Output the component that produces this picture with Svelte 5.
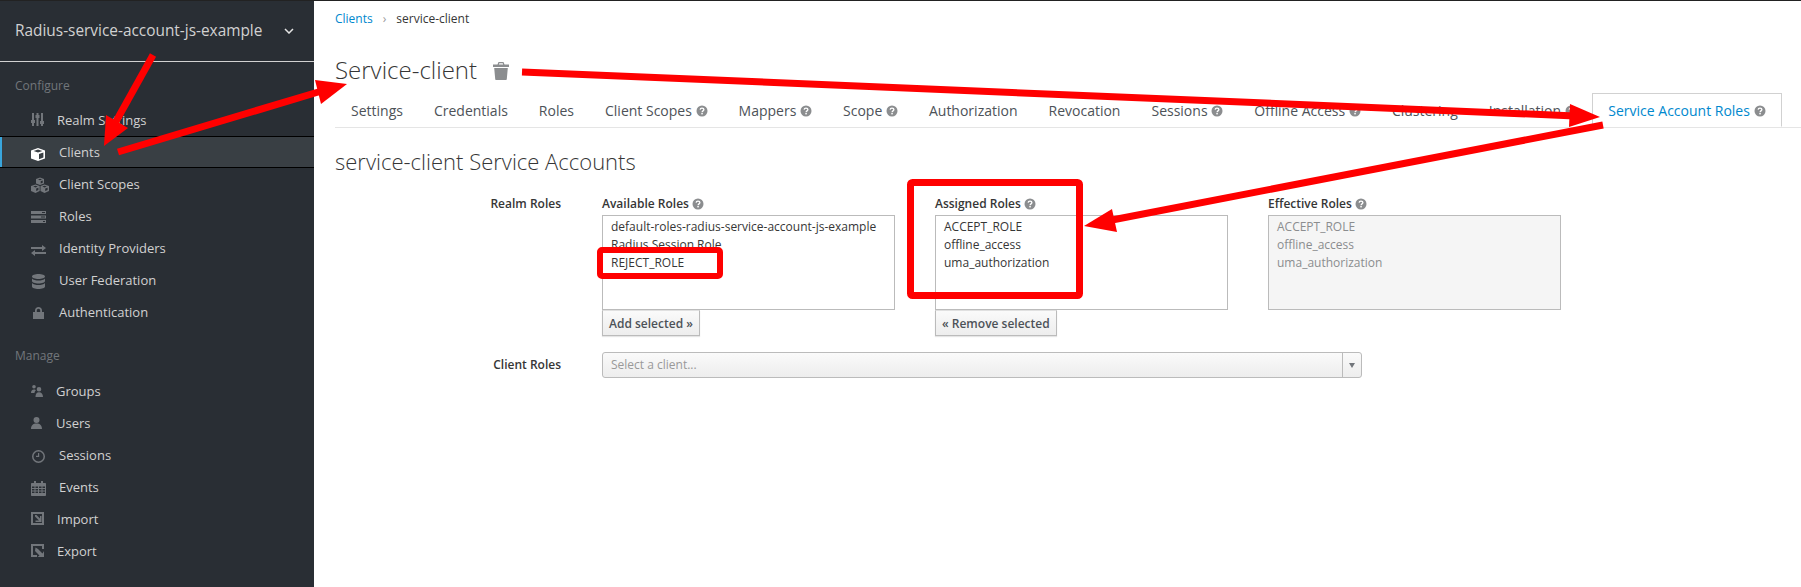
<script>
  const icons = {
    sliders: "M2 2h2v7h1v3H4v3H2v-3H1V9h1zM6.500 2h2v2h1v3h-1v8h-2V7h-1V4h1zM11 2h2v8h1v3h-1v2h-2v-2h-1v-3h1z",
    cube: "M8 5l7 2.400v8L8 18l-7-2.600v-8zM8 6.600L3.600 8 8 9.500 12.400 8zM9 11v5.200l4.400-1.700v-5z",
    cubes: "M10 2.500l4 1.500v4.500L10 10 6 8.500V4zM10 3.800L8 4.500l2 .8 2-.8zM10.700 6.300v2.200l2-.8V5.500zM5.500 9.500l4.200 1.500V16l-4.200 2L1 16v-5zM5.500 10.800l-2.300.8 2.300.9 2.200-.9zM6.200 13.500v2.600l2.200-1v-2.400zM14.500 9.500L19 11v5l-4.500 2-4-2v-5zM14.500 10.800l-2.200.8 2.200.9 2.300-.9zM15.200 13.500v2.600l2.400-1v-2.400z",
    roles: "M1 4h15v3H1zM12 5v1h3V5zM1 8.500h15v3H1zM11 9.500v1h4v-1zM1 13h15v3H1zM13 14v1h2v-1z",
    exchange: "M1 8h11V6l4 3-4 3v-2H1zM16 13H5v-2l-4 3 4 3v-2h11z",
    database: "M8.500 3c3.500 0 6.500 1 6.500 2.500S12 8 8.500 8 2 7 2 5.500 5 3 8.500 3zM2 7.500C3 9 6 9.500 8.500 9.500S14 9 15 7.500v2.500c0 1.500-3 2.500-6.500 2.500S2 11.500 2 10zM2 12c1 1.500 4 2 6.500 2s5.500-.5 6.500-2v3.500c0 1.500-3 2.500-6.500 2.500S2 17 2 15.500z",
    lock: "M5 9V7.500C5 5.500 6.500 4 8.500 4S12 5.500 12 7.500V9h2v7H3V9zM6.800 9h3.400V7.500c0-1-.7-1.800-1.700-1.800s-1.700.8-1.700 1.800z",
    groups: "M4 3a1.800 1.800 0 110 3.600A1.800 1.800 0 014 3zM1 11c0-2 1-3.500 3-3.500 1 0 1.500.3 2 .8C5 9 4.500 10 4.500 11zM9 5a2.300 2.300 0 110 4.600A2.300 2.300 0 019 5zM5.500 15c0-3 1.200-4.800 3.500-4.800s4 1.800 4 4.800z",
    user: "M6.500 3a3 3 0 110 6 3 3 0 010-6zM1 15c0-3.500 2-5.500 5.500-5.500S12 11.500 12 15z",
    clock: "M8.500 4a6.500 6.500 0 110 13 6.500 6.500 0 010-13zM8.500 5.500a5 5 0 100 10 5 5 0 000-10zM8 7h1.200v4H6v-1.200h2z",
    calendar: "M3 5h1V3h2v2h5V3h2v2h2c.6 0 1 .4 1 1v11c0 .6-.4 1-1 1H2c-.6 0-1-.4-1-1V6c0-.6.4-1 1-1zM2 8.500V10h2.500V8.500zM5.500 8.500V10H8V8.500zM9 8.500V10h2.500V8.500zM12.500 8.500V10H15V8.500zM2 11v1.500h2.500V11zM5.500 11v1.500H8V11zM9 11v1.500h2.500V11zM12.500 11v1.500H15V11zM2 13.500V15h2.500v-1.500zM5.500 13.500V15H8v-1.500zM9 13.500V15h2.500v-1.500zM12.500 13.500V15H15v-1.500z",
    import: "M1 2h13v13H1V2h2v11h9V4H3V2zM5 5h1.500l3.500 3.500V6h1.500v6H5.500v-1.500H9L5 6.500z",
    export: "M1 2h13v5h-2V4H3v9h4v2H1zM5.500 5.500L8 7l4.500 4.500L14 9v6H7.500l2-1.500-4.500-4.500z",
  };

  const configure = [
    { name: "Realm Settings", icon: "sliders", gap: 7 },
    { name: "Clients", icon: "cube", gap: 9, active: true },
    { name: "Client Scopes", icon: "cubes", gap: 9 },
    { name: "Roles", icon: "roles", gap: 9 },
    { name: "Identity Providers", icon: "exchange", gap: 9 },
    { name: "User Federation", icon: "database", gap: 9 },
    { name: "Authentication", icon: "lock", gap: 9 },
  ];
  const manage = [
    { name: "Groups", icon: "groups", gap: 6 },
    { name: "Users", icon: "user", gap: 6 },
    { name: "Sessions", icon: "clock", gap: 9 },
    { name: "Events", icon: "calendar", gap: 9 },
    { name: "Import", icon: "import", gap: 7 },
    { name: "Export", icon: "export", gap: 7 },
  ];

  const tabs = [
    { name: "Settings" },
    { name: "Credentials" },
    { name: "Roles" },
    { name: "Client Scopes", help: true },
    { name: "Mappers", help: true },
    { name: "Scope", help: true },
    { name: "Authorization" },
    { name: "Revocation" },
    { name: "Sessions", help: true },
    { name: "Offline Access", help: true },
    { name: "Clustering" },
    { name: "Installation", help: true },
    { name: "Service Account Roles", help: true, active: true },
  ];

  const available = ["default-roles-radius-service-account-js-example", "Radius Session Role", "REJECT_ROLE"];
  const assigned = ["ACCEPT_ROLE", "offline_access", "uma_authorization"];
</script>

{#snippet help()}
  <svg class="help" viewBox="0 0 12 12" aria-hidden="true">
    <circle cx="6" cy="6" r="5.500" fill="#8b8d8f" />
    <path d="M4.100 4.600c.1-1 .9-1.500 1.900-1.500 1.100 0 1.900.6 1.900 1.500 0 1.300-1.800 1.300-1.800 2.600" fill="none" stroke="#fff" stroke-width="1.300" />
    <rect x="5.300" y="8" width="1.500" height="1.400" fill="#fff" />
  </svg>
{/snippet}

{#snippet navRow(item)}
  <a class="nav-row" class:active={item.active} href="#top">
    <svg class="nav-icon" viewBox="0 0 20 18" aria-hidden="true">
      <path d={icons[item.icon]} fill-rule="evenodd" />
    </svg>
    <span style="margin-left: {item.gap}px">{item.name}</span>
  </a>
{/snippet}

<div class="page">
  <aside>
    <div class="realm">
      <span>Radius-service-account-js-example</span>
      <svg class="chevron" viewBox="0 0 10 6" aria-hidden="true">
        <path d="M1 1l4 4 4-4" fill="none" stroke="#e4e4e4" stroke-width="1.500" />
      </svg>
    </div>
    <h3 class="first">Configure</h3>
    {#each configure as item}
      {@render navRow(item)}
    {/each}
    <h3>Manage</h3>
    {#each manage as item}
      {@render navRow(item)}
    {/each}
  </aside>

  <main>
    <nav class="crumbs">
      <a href="#top">Clients</a>
      <span class="sep">›</span>
      <span>service-client</span>
    </nav>

    <h1>
      Service-client
      <svg class="trash" viewBox="0 0 16 18" aria-hidden="true">
        <path d="M5.500 0h5l1 2.500H16V5H0V2.500h4.500zM6.300 1.200L5.800 2.500h4.400l-.5-1.300zM1.200 6h13.600l-1 11c0 .6-.5 1-1 1H3.200c-.5 0-1-.4-1-1z" fill="#8b8d8f" fill-rule="evenodd" />
      </svg>
    </h1>

    <ul class="tabs">
      {#each tabs as tab}
        <li class:active={tab.active}>
          {tab.name}
          {#if tab.help}{@render help()}{/if}
        </li>
      {/each}
    </ul>

    <h2>service-client Service Accounts</h2>

    <div class="form-row">
      <span class="row-label">Realm Roles</span>
      <div class="col">
        <span class="col-label">Available Roles {@render help()}</span>
        <div class="list">
          {#each available as role}<div>{role}</div>{/each}
        </div>
        <button>Add selected »</button>
      </div>
      <div class="col">
        <span class="col-label">Assigned Roles {@render help()}</span>
        <div class="list">
          {#each assigned as role}<div>{role}</div>{/each}
        </div>
        <button>« Remove selected</button>
      </div>
      <div class="col">
        <span class="col-label">Effective Roles {@render help()}</span>
        <div class="list disabled">
          {#each assigned as role}<div>{role}</div>{/each}
        </div>
      </div>
    </div>

    <div class="form-row client-row">
      <span class="row-label">Client Roles</span>
      <div class="client-select">
        <span>Select a client...</span>
        <span class="addon"><i></i></span>
      </div>
    </div>
  </main>

  <!-- the red markup drawn on top of the screenshot -->
  <svg class="markup" viewBox="0 0 1801 587" aria-hidden="true">
    <g fill="none" stroke="#f00">
      <rect x="600" y="250" width="120" height="26" rx="2" stroke-width="6" />
      <rect x="910.500" y="182.500" width="169" height="113" rx="2" stroke-width="7" />
    </g>
    <g stroke="#f00" stroke-width="7">
      <line x1="153" y1="55" x2="114" y2="125" />
      <line x1="118" y1="152" x2="325" y2="90" />
      <line x1="522" y1="72" x2="1575" y2="116" />
      <line x1="1603" y1="125" x2="1112" y2="220" />
    </g>
    <g fill="#f00">
      <polygon points="104,146 106,115 128,128" />
      <polygon points="347,84 315,80 321,104" />
      <polygon points="1600,117 1570,104 1569,127" />
      <polygon points="1084,226 1112,209 1117,232" />
    </g>
  </svg>
</div>

<style>
  :global(body) {
    background: #fff;
    overflow: hidden;
  }

  .page {
    position: relative;
    display: flex;
    height: 587px;
    box-sizing: border-box;
    border-top: 1px solid #222;
    overflow: hidden;
    font-family: "Open Sans", "Liberation Sans", sans-serif;
    font-size: 12px;
    line-height: 18px;
    color: #363636;
  }

  aside {
    flex: 0 0 314px;
    background: #292e34;
    color: #d1d1d1;
  }

  .realm {
    display: flex;
    align-items: center;
    justify-content: space-between;
    height: 60px;
    padding: 0 20px 0 15px;
    border-bottom: 1px solid #d1d1d1;
    font-size: 15.400px;
    color: #d1d1d1;
  }

  .chevron {
    width: 10px;
    height: 6px;
  }

  h3 {
    margin: 18px 0 9px;
    padding-left: 15px;
    font-size: 12px;
    line-height: 20px;
    font-weight: 400;
    color: #72767b;
  }

  h3.first {
    margin-top: 14px;
    margin-bottom: 8px;
  }

  .nav-row {
    display: flex;
    align-items: center;
    height: 30px;
    padding-left: 30px;
    border-top: 1px solid transparent;
    border-bottom: 1px solid transparent;
    color: #d1d1d1;
    font-size: 13px;
    text-decoration: none;
  }

  .nav-row.active {
    background: #393f44;
    border-top-color: #000;
    border-bottom-color: #000;
    box-shadow: inset 2px 0 0 #39a5dc;
  }

  .nav-icon {
    flex: none;
    width: 20px;
    height: 18px;
    fill: #72767b;
  }

  .nav-row.active .nav-icon {
    fill: #fff;
  }

  main {
    flex: 1;
    min-width: 0;
    padding-left: 21px;
  }

  .crumbs {
    display: flex;
    gap: 10px;
    padding-top: 9px;
    color: #363636;
  }

  .crumbs a {
    color: #0088ce;
    text-decoration: none;
  }

  .sep {
    color: #9c9c9c;
  }

  h1 {
    display: flex;
    align-items: center;
    gap: 16px;
    margin: 26px 0 0;
    font-size: 24px;
    line-height: 32px;
    font-weight: 300;
    color: #363636;
  }

  .trash {
    width: 16px;
    height: 18px;
    margin-top: 2px;
  }

  .tabs {
    display: flex;
    margin: 7px 0 0;
    padding: 0;
    list-style: none;
    border-bottom: 1px solid #e5e5e5;
    height: 34px;
  }

  .tabs li {
    display: flex;
    align-items: center;
    gap: 3.700px;
    padding: 1px 15.500px 0;
    font-size: 14px;
    color: #4d5258;
    white-space: nowrap;
  }

  .tabs li:first-child {
    padding-left: 16px;
  }

  .tabs li.active {
    background: #fff;
    border: 1px solid #d1d1d1;
    border-bottom-color: #fff;
    color: #0088ce;
    padding: 1px 15px 0;
  }

  .help {
    flex: none;
    width: 12px;
    height: 12px;
    vertical-align: -2px;
  }

  h2 {
    margin: 19px 0 20px;
    font-size: 22px;
    line-height: 28px;
    font-weight: 300;
    color: #363636;
  }

  .form-row {
    display: flex;
    gap: 40px;
  }

  .row-label {
    flex: 0 0 226px;
    margin-right: 1px;
    text-align: right;
    font-weight: 600;
  }

  .col {
    flex: 0 0 293px;
  }

  .col-label {
    display: block;
    margin-bottom: 2px;
    font-weight: 600;
  }

  .list {
    height: 91px;
    padding: 2px 8px 0;
    border: 1px solid #bbb;
    color: #363636;
  }

  .list.disabled {
    background: #f5f5f5;
    color: #8b8d8f;
  }

  button {
    display: block;
    height: 26px;
    margin: 0;
    padding: 0 6px;
    background: linear-gradient(#fafafa, #ededed);
    border: 1px solid #bbb;
    border-top-color: #e0e0e0;
    box-shadow: 0 1px 1px rgba(3, 3, 3, 0.1);
    font: 600 12px "Open Sans", "Liberation Sans", sans-serif;
    color: #4d5258;
  }

  .client-row {
    margin-top: 16px;
    align-items: center;
  }

  .client-select {
    display: flex;
    justify-content: space-between;
    align-items: stretch;
    flex: 0 0 760px;
    box-sizing: border-box;
    height: 26px;
    padding-left: 8px;
    background: linear-gradient(#fafafa, #ededed);
    border: 1px solid #bbb;
    border-radius: 3px;
    line-height: 24px;
    color: #999;
  }

  .addon {
    display: flex;
    align-items: center;
    justify-content: center;
    width: 18px;
    border-left: 1px solid #bbb;
  }

  .addon i {
    width: 0;
    height: 0;
    border: 3px solid transparent;
    border-top: 5px solid #72767b;
    border-bottom: 0;
  }

  .markup {
    position: absolute;
    left: 0;
    top: -1px;
    width: 1801px;
    height: 587px;
    pointer-events: none;
  }
</style>
